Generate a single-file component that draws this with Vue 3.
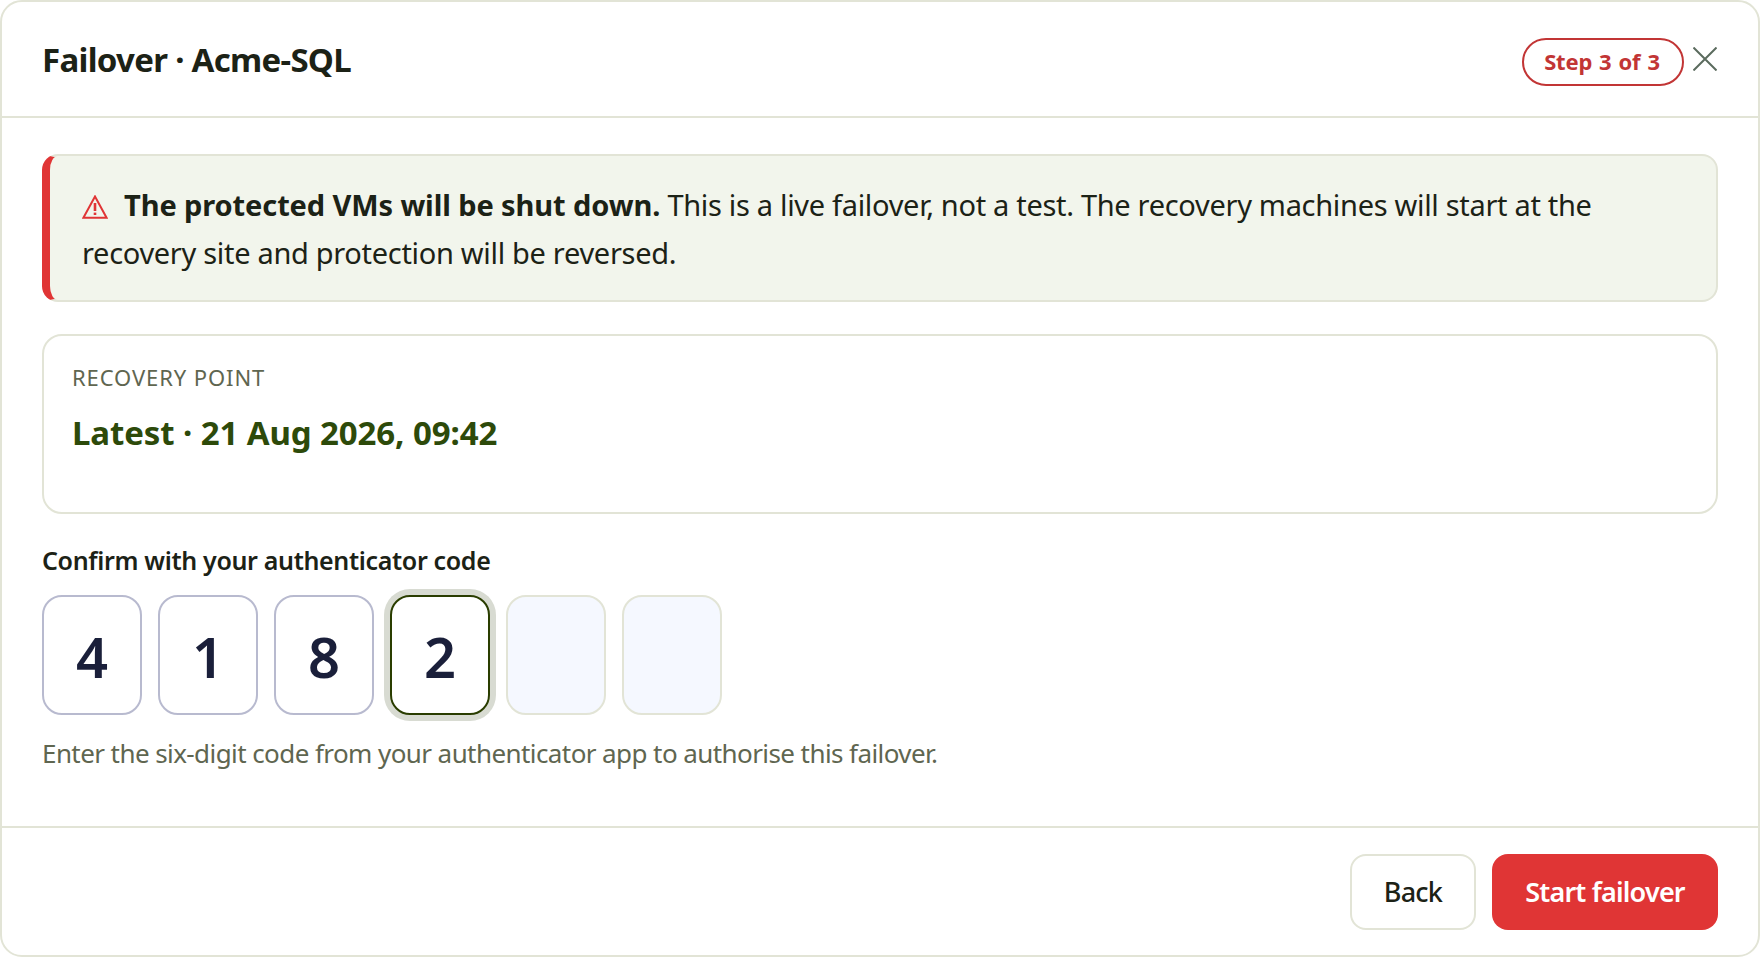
<script setup>
const digits = ['4', '1', '8', '2', '', '']
const focusIndex = 3
</script>

<template>
  <div class="dialog">
    <header class="dialog-header">
      <h1 class="dialog-title">Failover · Acme-SQL</h1>
      <div class="header-actions">
        <span class="step-badge">Step 3 of 3</span>
        <button class="close-btn" aria-label="Close">
          <svg width="24" height="24" viewBox="0 0 24 24" fill="none" stroke="#5b6b5e" stroke-width="2">
            <path d="M0.5 0.5 L23.5 23.5 M23.5 0.5 L0.5 23.5" />
          </svg>
        </button>
      </div>
    </header>

    <main class="dialog-body">
      <div class="alert">
        <svg class="alert-icon" width="26" height="24" viewBox="0 0 26 24" fill="none" stroke="#e03535">
          <path d="M13 1.5 L24.6 22.8 H1.4 Z" stroke-width="2" stroke-linejoin="miter" />
          <path d="M13 8 V16" stroke-width="2.6" />
          <path d="M13 17.6 V20" stroke-width="2.6" />
        </svg>
        <strong>The protected VMs will be shut down.</strong> This is a live failover, not a test. The recovery machines will start at the recovery site and protection will be reversed.
      </div>

      <section class="recovery">
        <div class="recovery-label">RECOVERY POINT</div>
        <div class="recovery-value">Latest · 21 Aug 2026, 09:42</div>
      </section>

      <div class="code-label">Confirm with your authenticator code</div>
      <div class="code-row">
        <div
          v-for="(d, i) in digits"
          :key="i"
          class="code-box"
          :class="{ filled: d, focused: i === focusIndex }"
        >{{ d }}</div>
      </div>
      <p class="code-help">Enter the six-digit code from your authenticator app to authorise this failover.</p>
    </main>

    <footer class="dialog-footer">
      <button class="btn btn-back">Back</button>
      <button class="btn btn-danger">Start failover</button>
    </footer>
  </div>
</template>

<style>
html, body {
  margin: 0;
  background: #fff;
}
</style>

<style scoped>
.dialog {
  box-sizing: border-box;
  width: 1760px;
  height: 957px;
  display: flex;
  flex-direction: column;
  background: #fff;
  border: 2px solid #e2e4d6;
  border-radius: 22px;
  font-family: "Noto Sans", "Open Sans", sans-serif;
  color: #1c2216;
}

.dialog-header {
  height: 116px;
  flex: none;
  box-sizing: border-box;
  border-bottom: 2px solid #e2e4d6;
  padding: 0 40px;
  display: flex;
  justify-content: space-between;
  align-items: center;
}

.dialog-title {
  margin: 0;
  font-size: 33px;
  font-weight: 700;
  letter-spacing: -0.7px;
}

.header-actions {
  display: flex;
  align-items: center;
  gap: 9px;
  margin-top: 6px;
  margin-right: 1px;
}

.step-badge {
  box-sizing: border-box;
  height: 48px;
  width: 162px;
  padding: 0 2px 2px 0;
  display: flex;
  align-items: center;
  justify-content: center;
  border: 2px solid #c23535;
  border-radius: 24px;
  color: #c23535;
  font-size: 22px;
  font-weight: 700;
  white-space: nowrap;
  word-spacing: 1.5px;
  letter-spacing: -0.2px;
}

.close-btn {
  padding: 0;
  margin: 0 0 7px;
  background: none;
  border: 0;
  width: 24px;
  height: 24px;
  display: block;
}

.dialog-body {
  flex: 1;
  padding: 36px 40px 0;
}

.alert {
  box-sizing: border-box;
  height: 148px;
  background: #f2f5ec;
  border: 2px solid #e2e4d6;
  border-left: 8px solid #e03535;
  border-radius: 16px;
  padding: 25px 60px 19px 32px;
  font-size: 29px;
  line-height: 48px;
  letter-spacing: -0.31px;
}

.alert-icon {
  vertical-align: -3px;
  margin-right: 16px;
}

.alert strong {
  font-weight: 700;
  letter-spacing: -0.1px;
}

.recovery {
  box-sizing: border-box;
  height: 180px;
  margin-top: 32px;
  border: 2px solid #e2e4d6;
  border-radius: 20px;
  padding: 26px 28px;
}

.recovery-label {
  font-size: 22px;
  line-height: 30px;
  color: #5f6650;
  letter-spacing: 0.9px;
}

.recovery-value {
  margin-top: 19px;
  font-size: 33px;
  line-height: 44px;
  font-weight: 700;
  color: #2d4a0a;
  letter-spacing: -0.1px;
}

.code-label {
  margin-top: 28px;
  font-size: 25px;
  line-height: 36px;
  font-weight: 600;
  letter-spacing: -0.34px;
}

.code-row {
  display: flex;
  gap: 16px;
  margin-top: 17px;
}

.code-box {
  box-sizing: border-box;
  width: 100px;
  height: 120px;
  padding-top: 2px;
  display: flex;
  align-items: center;
  justify-content: center;
  border: 2px solid #e2e4d6;
  border-radius: 20px;
  background: #f5f8ff;
  font-size: 56px;
  font-weight: 600;
  color: #1a1f3a;
}

.code-box.filled {
  background: #fff;
  border-color: #b8bacf;
}

.code-box.focused {
  border-color: #2a3d00;
  box-shadow: 0 0 0 6px #d8dbd2;
}

.code-help {
  margin: 20px 0 0;
  font-size: 26px;
  line-height: 36px;
  color: #5f6650;
  letter-spacing: -0.58px;
}

.dialog-footer {
  height: 129px;
  flex: none;
  box-sizing: border-box;
  border-top: 2px solid #e2e4d6;
  padding: 26px 40px 0;
  display: flex;
  justify-content: flex-end;
  align-items: flex-start;
  gap: 16px;
}

.btn {
  height: 76px;
  box-sizing: border-box;
  padding: 0 0 2px;
  border-radius: 16px;
  font-family: inherit;
  font-size: 27px;
  font-weight: 500;
  letter-spacing: -0.8px;
  cursor: pointer;
}

.btn-back {
  width: 126px;
  background: #fff;
  border: 2px solid #e2e4d6;
  color: #1c2216;
}

.btn-danger {
  width: 226px;
  background: #e03535;
  border: 0;
  color: #fff;
  font-weight: 600;
}
</style>
